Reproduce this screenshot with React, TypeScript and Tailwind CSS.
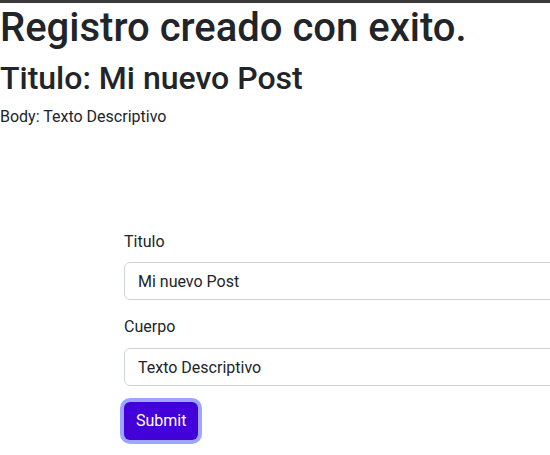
export default function App() {
  return (
    <div className="min-h-[455px] bg-white font-['Roboto',sans-serif] text-[#212529]">
      <div className="h-[3px] bg-[#3a3a3a]" />
      <h1 className="mt-px text-[40px] leading-[1.2] font-medium">Registro creado con exito.</h1>
      <h2 className="mt-[7px] text-[32px] leading-[1.2] font-medium">Titulo: Mi nuevo Post</h2>
      <p className="mt-[8px] text-[16px] leading-[1.5]">Body: Texto Descriptivo</p>

      <form className="mt-[101px] ml-[124px] flex flex-col" onSubmit={(e) => e.preventDefault()}>
        <label className="text-[16px] leading-[1.5]">Titulo</label>
        <input
          className="mt-[8px] h-[38px] w-[440px] rounded-[6px] border border-[#ced4da] px-[13px] text-[16px] outline-none"
          defaultValue="Mi nuevo Post"
        />
        <label className="mt-[15px] text-[16px] leading-[1.5]">Cuerpo</label>
        <input
          className="mt-[9px] h-[38px] w-[440px] rounded-[6px] border border-[#ced4da] px-[13px] text-[16px] outline-none"
          defaultValue="Texto Descriptivo"
        />
        <div className="mt-[16px]">
          <button
            type="submit"
            className="h-[38px] rounded-[6px] bg-[#4400d8] px-[12px] text-[16px] text-white ring-4 ring-[#9da6ff]"
          >
            Submit
          </button>
        </div>
      </form>
    </div>
  );
}
